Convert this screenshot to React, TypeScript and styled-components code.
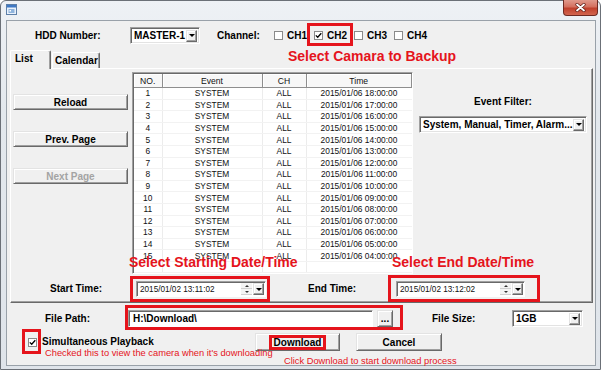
import styled, { createGlobalStyle } from "styled-components";

const RED = "#e5141c";
const UI_FONT = `"Liberation Sans", Arial, sans-serif`;

const events = Array.from({ length: 15 }, (_, i) => ({
  no: i + 1,
  event: "SYSTEM",
  ch: "ALL",
  time: `2015/01/06 ${String(18 - i).padStart(2, "0")}:00:00`,
}));

const Combo = ({ w, children }: { w: number; children: React.ReactNode }) => (
  <ComboBox $w={w}>
    <ComboText>{children}</ComboText>
    <DropButton>
      <DownArrow />
    </DropButton>
  </ComboBox>
);

const CheckMark = () => (
  <svg width="7" height="7" viewBox="0 0 7 7">
    <path d="M0.8 3.4 L2.7 5.3 L6.3 1.2" fill="none" stroke="#000" strokeWidth="1.3" />
  </svg>
);

const CheckItem = ({ label, checked }: { label: string; checked?: boolean }) => (
  <CheckLabel>
    <CheckBox>{checked && <CheckMark />}</CheckBox>
    {label}
  </CheckLabel>
);

const DateTime = ({ w, value }: { w: number; value: string }) => (
  <DateBox $w={w}>
    <DateText>{value}</DateText>
    <Spinner>
      <SpinHalf>
        <UpArrow />
      </SpinHalf>
      <SpinHalf>
        <SmallDown />
      </SpinHalf>
    </Spinner>
    <DropButton>
      <DownArrow />
    </DropButton>
  </DateBox>
);

export default function App() {
  return (
    <>
      <GlobalStyle />
      <Window>
        <TitleBar>
          <AppIcon width="11" height="11" viewBox="0 0 11 11">
            <rect x="0.5" y="0.5" width="10" height="10" fill="#e9f1fb" stroke="#5d7fa8" />
            <rect x="1" y="1" width="9" height="2.5" fill="#3f78c4" />
            <rect x="2.5" y="5" width="6" height="4" fill="#8fb4dd" />
            <rect x="3.5" y="6" width="1.5" height="1.5" fill="#ffffff" />
          </AppIcon>
          <CloseButton>
            <svg width="11" height="9" viewBox="0 0 11 9">
              <path d="M2 1.5 L9 7.5 M9 1.5 L2 7.5" stroke="#5b1b14" strokeWidth="3.2" strokeLinecap="round" />
              <path d="M2 1.5 L9 7.5 M9 1.5 L2 7.5" stroke="#ffffff" strokeWidth="1.8" strokeLinecap="round" />
            </svg>
          </CloseButton>
        </TitleBar>

        <Client>
          <HeaderRow>
            <Label $w={95}>HDD Number:</Label>
            <Combo w={70}>MASTER-1</Combo>
            <Label $w={57} $ml={17}>
              Channel:
            </Label>
            <Channels>
              <CheckItem label="CH1" />
              <Marked $t={4} $r={6} $b={2} $l={7}>
                <CheckItem label="CH2" checked />
              </Marked>
              <CheckItem label="CH3" />
              <CheckItem label="CH4" />
            </Channels>
          </HeaderRow>

          <TabStrip>
            <Tab $active $w={41} $pl={4}>
              List
            </Tab>
            <Tab $w={48} $pl={2}>
              Calendar
            </Tab>
            <Heading>Select Camara to Backup</Heading>
          </TabStrip>

          <Panel>
            <ListArea>
              <ButtonColumn>
                <Button $w={115}>Reload</Button>
                <Button $w={115}>Prev. Page</Button>
                <Button $w={115} $disabled>
                  Next Page
                </Button>
              </ButtonColumn>

              <TableFrame>
                <Grid>
                  <colgroup>
                    <col style={{ width: 28 }} />
                    <col style={{ width: 100 }} />
                    <col style={{ width: 44 }} />
                    <col />
                  </colgroup>
                  <thead>
                    <tr>
                      <Th>NO.</Th>
                      <Th>Event</Th>
                      <Th>CH</Th>
                      <Th>Time</Th>
                    </tr>
                  </thead>
                  <tbody>
                    {events.map((e) => (
                      <Row key={e.no}>
                        <Td>{e.no}</Td>
                        <Td>{e.event}</Td>
                        <Td>{e.ch}</Td>
                        <Td>{e.time}</Td>
                      </Row>
                    ))}
                    <FillerRow>
                      <Td />
                      <Td />
                      <Td />
                      <Td />
                    </FillerRow>
                  </tbody>
                </Grid>
              </TableFrame>

              <FilterColumn>
                <Label>Event Filter:</Label>
                <Combo w={168}>System, Manual, Timer, Alarm...</Combo>
              </FilterColumn>
            </ListArea>

            <DateRow>
              <Label $w={86}>Start Time:</Label>
              <Marked $t={5} $r={4} $b={5} $l={6}>
                <Note $size={14} $bold $x={-7} $y={-27}>
                  Select Starting Date/Time
                </Note>
                <DateTime w={130} value="2015/01/02 13:11:02" />
              </Marked>
              <Label $w={88} $ml={42}>
                End Time:
              </Label>
              <Marked $t={6} $r={15} $b={5} $l={8}>
                <Note $size={14} $bold $x={-4} $y={-27}>
                  Select End Date/Time
                </Note>
                <DateTime w={129} value="2015/01/02 13:12:02" />
              </Marked>
            </DateRow>
          </Panel>

          <FileRow>
            <Label $w={83}>File Path:</Label>
            <Marked $t={5} $r={10} $b={3} $l={3}>
              <PathInput>H:\Download\</PathInput>
              <Button $w={16} $h={17} $ml={4}>
                ...
              </Button>
            </Marked>
            <Label $w={80} $ml={39}>
              File Size:
            </Label>
            <Combo w={71}>1GB</Combo>
          </FileRow>

          <ActionRow>
            <Marked $t={9} $r={4} $b={7} $l={6}>
              <CheckBox>
                <CheckMark />
              </CheckBox>
            </Marked>
            <OptionLabel>
              Simultaneous Playback
              <Note $size={9.3} $x={3} $y={12}>
                Checked this to view the camera when it&apos;s downloading
              </Note>
            </OptionLabel>
            <Button $w={85} $h={18}>
              <Marked $t={3} $r={5} $b={3} $l={5}>
                Download
              </Marked>
              <Note $size={9.3} $x={28} $y={22}>
                Click Download to start download process
              </Note>
            </Button>
            <Button $w={86} $h={18} $ml={16}>
              Cancel
            </Button>
          </ActionRow>
        </Client>
      </Window>
    </>
  );
}

const GlobalStyle = createGlobalStyle`
  html, body {
    margin: 0;
    padding: 0;
  }

  body {
    width: 601px;
    height: 370px;
    overflow: hidden;
    background: #ffffff;
    font-family: ${UI_FONT};
  }
`;

const Window = styled.div`
  box-sizing: border-box;
  width: 601px;
  height: 370px;
  display: flex;
  flex-direction: column;
  padding: 0 4px 3px 5px;
  border: 1px solid #6b7077;
  border-radius: 6px 6px 0 0;
  background: linear-gradient(to bottom, #eef1f5 0%, #e3e8ed 30%, #dfe4ea 100%);
`;

const TitleBar = styled.div`
  flex: none;
  height: 19px;
  display: flex;
  align-items: flex-start;
  justify-content: space-between;
`;

const AppIcon = styled.svg`
  margin: 3px 0 0 0;
`;

const CloseButton = styled.div`
  box-sizing: border-box;
  width: 35px;
  height: 16px;
  margin: -1px -2px 0 0;
  display: flex;
  align-items: center;
  justify-content: center;
  border: 1px solid #6e2a22;
  border-top: none;
  border-radius: 0 0 4px 4px;
  background: linear-gradient(to bottom, #e09a8c 0%, #d4705f 45%, #c0402c 55%, #d2654f 100%);
`;

const Client = styled.div`
  flex: 1;
  min-height: 0;
  box-sizing: border-box;
  display: flex;
  flex-direction: column;
  border: 1px solid #99a1a9;
  background: #f0f0f0;
`;

const HeaderRow = styled.div`
  display: flex;
  align-items: center;
  height: 17px;
  margin-top: 6px;
  padding-left: 28px;
`;

const Label = styled.span<{ $w?: number; $ml?: number }>`
  flex: none;
  display: block;
  width: ${(p) => (p.$w ? `${p.$w}px` : "auto")};
  margin-left: ${(p) => p.$ml ?? 0}px;
  font: bold 10px ${UI_FONT};
  line-height: 12px;
  color: #000;
  white-space: nowrap;
`;

const ComboBox = styled.div<{ $w: number }>`
  flex: none;
  box-sizing: border-box;
  width: ${(p) => p.$w}px;
  height: 17px;
  display: flex;
  align-items: center;
  padding: 2px 2px 2px 3px;
  background: #fff;
  border: 1px solid;
  border-color: #a0a0a0 #ffffff #ffffff #a0a0a0;
  box-shadow: inset 1px 1px #696969, inset -1px -1px #e3e3e3;
  font: bold 10px ${UI_FONT};
  color: #000;
`;

const ComboText = styled.span`
  flex: 1;
  min-width: 0;
  white-space: nowrap;
`;

const DropButton = styled.span`
  flex: none;
  box-sizing: border-box;
  width: 11px;
  height: 12px;
  display: flex;
  align-items: center;
  justify-content: center;
  background: #f0f0f0;
  border: 1px solid;
  border-color: #e3e3e3 #696969 #696969 #e3e3e3;
  box-shadow: inset -1px -1px #a0a0a0, inset 1px 1px #fff;
`;

const DownArrow = styled.span`
  width: 0;
  height: 0;
  border-left: 3px solid transparent;
  border-right: 3px solid transparent;
  border-top: 3px solid #000;
`;

const Channels = styled.div`
  display: flex;
  align-items: stretch;
  align-self: stretch;
  gap: 7px;
`;

const CheckLabel = styled.span`
  display: flex;
  align-items: center;
  gap: 4px;
  height: 100%;
  font: bold 10px ${UI_FONT};
  color: #000;
`;

const CheckBox = styled.span`
  flex: none;
  box-sizing: border-box;
  width: 9px;
  height: 9px;
  display: flex;
  align-items: center;
  justify-content: center;
  background: #fff;
  border: 1px solid #8a8a8a;
`;

const Marked = styled.div<{ $t: number; $r: number; $b: number; $l: number }>`
  position: relative;
  display: flex;
  align-items: center;

  &::after {
    content: "";
    position: absolute;
    top: -${(p) => p.$t}px;
    right: -${(p) => p.$r}px;
    bottom: -${(p) => p.$b}px;
    left: -${(p) => p.$l}px;
    border: 3px solid ${RED};
    pointer-events: none;
    z-index: 2;
  }
`;

const Note = styled.span<{ $size: number; $bold?: boolean; $x: number; $y: number }>`
  position: absolute;
  left: ${(p) => p.$x}px;
  top: ${(p) => p.$y}px;
  z-index: 3;
  white-space: nowrap;
  font-family: ${UI_FONT};
  font-size: ${(p) => p.$size}px;
  font-weight: ${(p) => (p.$bold ? 700 : 400)};
  line-height: ${(p) => (p.$bold ? 16 : 11)}px;
  color: ${RED};
`;

const TabStrip = styled.div`
  display: flex;
  align-items: flex-end;
  height: 18px;
  margin-top: 6px;
  padding-left: 3px;
`;

const Tab = styled.div<{ $active?: boolean; $w: number; $pl: number }>`
  position: relative;
  z-index: ${(p) => (p.$active ? 1 : 0)};
  box-sizing: border-box;
  width: ${(p) => p.$w}px;
  height: ${(p) => (p.$active ? 19 : 16)}px;
  margin-bottom: ${(p) => (p.$active ? -1 : 0)}px;
  margin-left: ${(p) => (p.$active ? 0 : 1)}px;
  padding: 2px 0 0 ${(p) => p.$pl}px;
  background: #f0f0f0;
  border: 1px solid;
  border-color: #ffffff #696969 transparent #ffffff;
  border-bottom: none;
  border-radius: 2px 2px 0 0;
  box-shadow: inset -1px 0 #a0a0a0;
  font: bold 10px ${UI_FONT};
  line-height: 12px;
  color: #000;
`;

const Heading = styled.span`
  margin: 0 0 4px 188px;
  font: bold 14px ${UI_FONT};
  line-height: 16px;
  color: ${RED};
  white-space: nowrap;
`;

const Panel = styled.div`
  box-sizing: border-box;
  width: 583px;
  height: 235px;
  margin-left: 3px;
  display: flex;
  flex-direction: column;
  border: 1px solid;
  border-color: #ffffff #696969 #696969 #ffffff;
  box-shadow: inset -1px -1px #a0a0a0;
`;

const ListArea = styled.div`
  display: flex;
  align-items: flex-start;
  height: 202px;
  padding: 3px 0 0 2px;
`;

const ButtonColumn = styled.div`
  display: flex;
  flex-direction: column;
  gap: 21px;
  padding-top: 22px;
`;

const Button = styled.div<{ $w: number; $h?: number; $ml?: number; $disabled?: boolean }>`
  position: relative;
  flex: none;
  box-sizing: border-box;
  width: ${(p) => p.$w}px;
  height: ${(p) => p.$h ?? 16}px;
  margin-left: ${(p) => p.$ml ?? 0}px;
  display: flex;
  align-items: center;
  justify-content: center;
  background: #f0f0f0;
  border: 1px solid;
  border-color: #e3e3e3 #696969 #696969 #e3e3e3;
  box-shadow: inset 1px 1px #ffffff, inset -1px -1px #a0a0a0;
  font: bold 10px ${UI_FONT};
  line-height: 9px;
  color: ${(p) => (p.$disabled ? "#a3a3a3" : "#000")};
`;

const TableFrame = styled.div`
  box-sizing: border-box;
  width: 281px;
  height: 202px;
  margin-left: 4px;
  background: #fff;
  border: 1px solid;
  border-color: #a0a0a0 #ffffff #ffffff #a0a0a0;
  box-shadow: inset 1px 1px #696969;
  padding: 1px 0 0 1px;
  overflow: hidden;
`;

const Grid = styled.table`
  width: 100%;
  height: 100%;
  border-collapse: collapse;
  table-layout: fixed;
  font-family: ${UI_FONT};
  color: #111;
`;

const Th = styled.th`
  height: 13px;
  padding: 0;
  font-size: 8.6px;
  font-weight: 400;
  text-align: center;
  background: #f7f7f7;
  border-right: 1px solid #8e8e8e;
  border-bottom: 1px solid #8e8e8e;
  box-shadow: inset 1px 1px #ffffff;
`;

const Row = styled.tr`
  height: 11.6px;
`;

const FillerRow = styled.tr`
  height: auto;
`;

const Td = styled.td`
  padding: 0;
  font-size: 8.4px;
  line-height: 10px;
  text-align: center;
  white-space: nowrap;
  border-right: 1px solid #ececec;
  border-bottom: 1px solid #f2f2f2;

  &:last-child {
    border-right: none;
  }
`;

const FilterColumn = styled.div`
  width: 168px;
  margin-left: 6px;
  padding-top: 24px;
  display: flex;
  flex-direction: column;
  align-items: center;
  gap: 8px;
`;

const DateRow = styled.div`
  display: flex;
  align-items: center;
  height: 16px;
  margin-top: 7px;
  padding-left: 39px;
`;

const DateBox = styled.div<{ $w: number }>`
  box-sizing: border-box;
  width: ${(p) => p.$w}px;
  height: 16px;
  display: flex;
  align-items: center;
  padding: 1px 1px 1px 3px;
  background: #fff;
  border: 1px solid;
  border-color: #a0a0a0 #ffffff #ffffff #a0a0a0;
  box-shadow: inset 1px 1px #696969;
`;

const DateText = styled.span`
  flex: 1;
  font: 8.2px ${UI_FONT};
  color: #111;
  white-space: nowrap;
`;

const Spinner = styled.span`
  display: flex;
  flex-direction: column;
  width: 11px;
  height: 12px;
  margin-right: 1px;
`;

const SpinHalf = styled.span`
  flex: 1;
  display: flex;
  align-items: center;
  justify-content: center;
  background: #f4f4f4;
  border-bottom: 1px solid #d0d0d0;
`;

const UpArrow = styled.span`
  width: 0;
  height: 0;
  border-left: 2px solid transparent;
  border-right: 2px solid transparent;
  border-bottom: 2px solid #333;
`;

const SmallDown = styled.span`
  width: 0;
  height: 0;
  border-left: 2px solid transparent;
  border-right: 2px solid transparent;
  border-top: 2px solid #333;
`;

const FileRow = styled.div`
  display: flex;
  align-items: center;
  height: 17px;
  margin-top: 7px;
  padding-left: 38px;
`;

const PathInput = styled.div`
  box-sizing: border-box;
  width: 245px;
  height: 17px;
  display: flex;
  align-items: center;
  padding-left: 4px;
  background: #fff;
  border: 1px solid;
  border-color: #a0a0a0 #ffffff #ffffff #a0a0a0;
  box-shadow: inset 1px 1px #696969;
  font: bold 10px ${UI_FONT};
  color: #000;
`;

const ActionRow = styled.div`
  display: flex;
  align-items: center;
  height: 18px;
  margin-top: 6px;
  padding-left: 21px;
`;

const OptionLabel = styled.span`
  position: relative;
  flex: none;
  width: 213px;
  margin-left: 5px;
  font: bold 10px ${UI_FONT};
  line-height: 12px;
  color: #000;
  white-space: nowrap;
`;
